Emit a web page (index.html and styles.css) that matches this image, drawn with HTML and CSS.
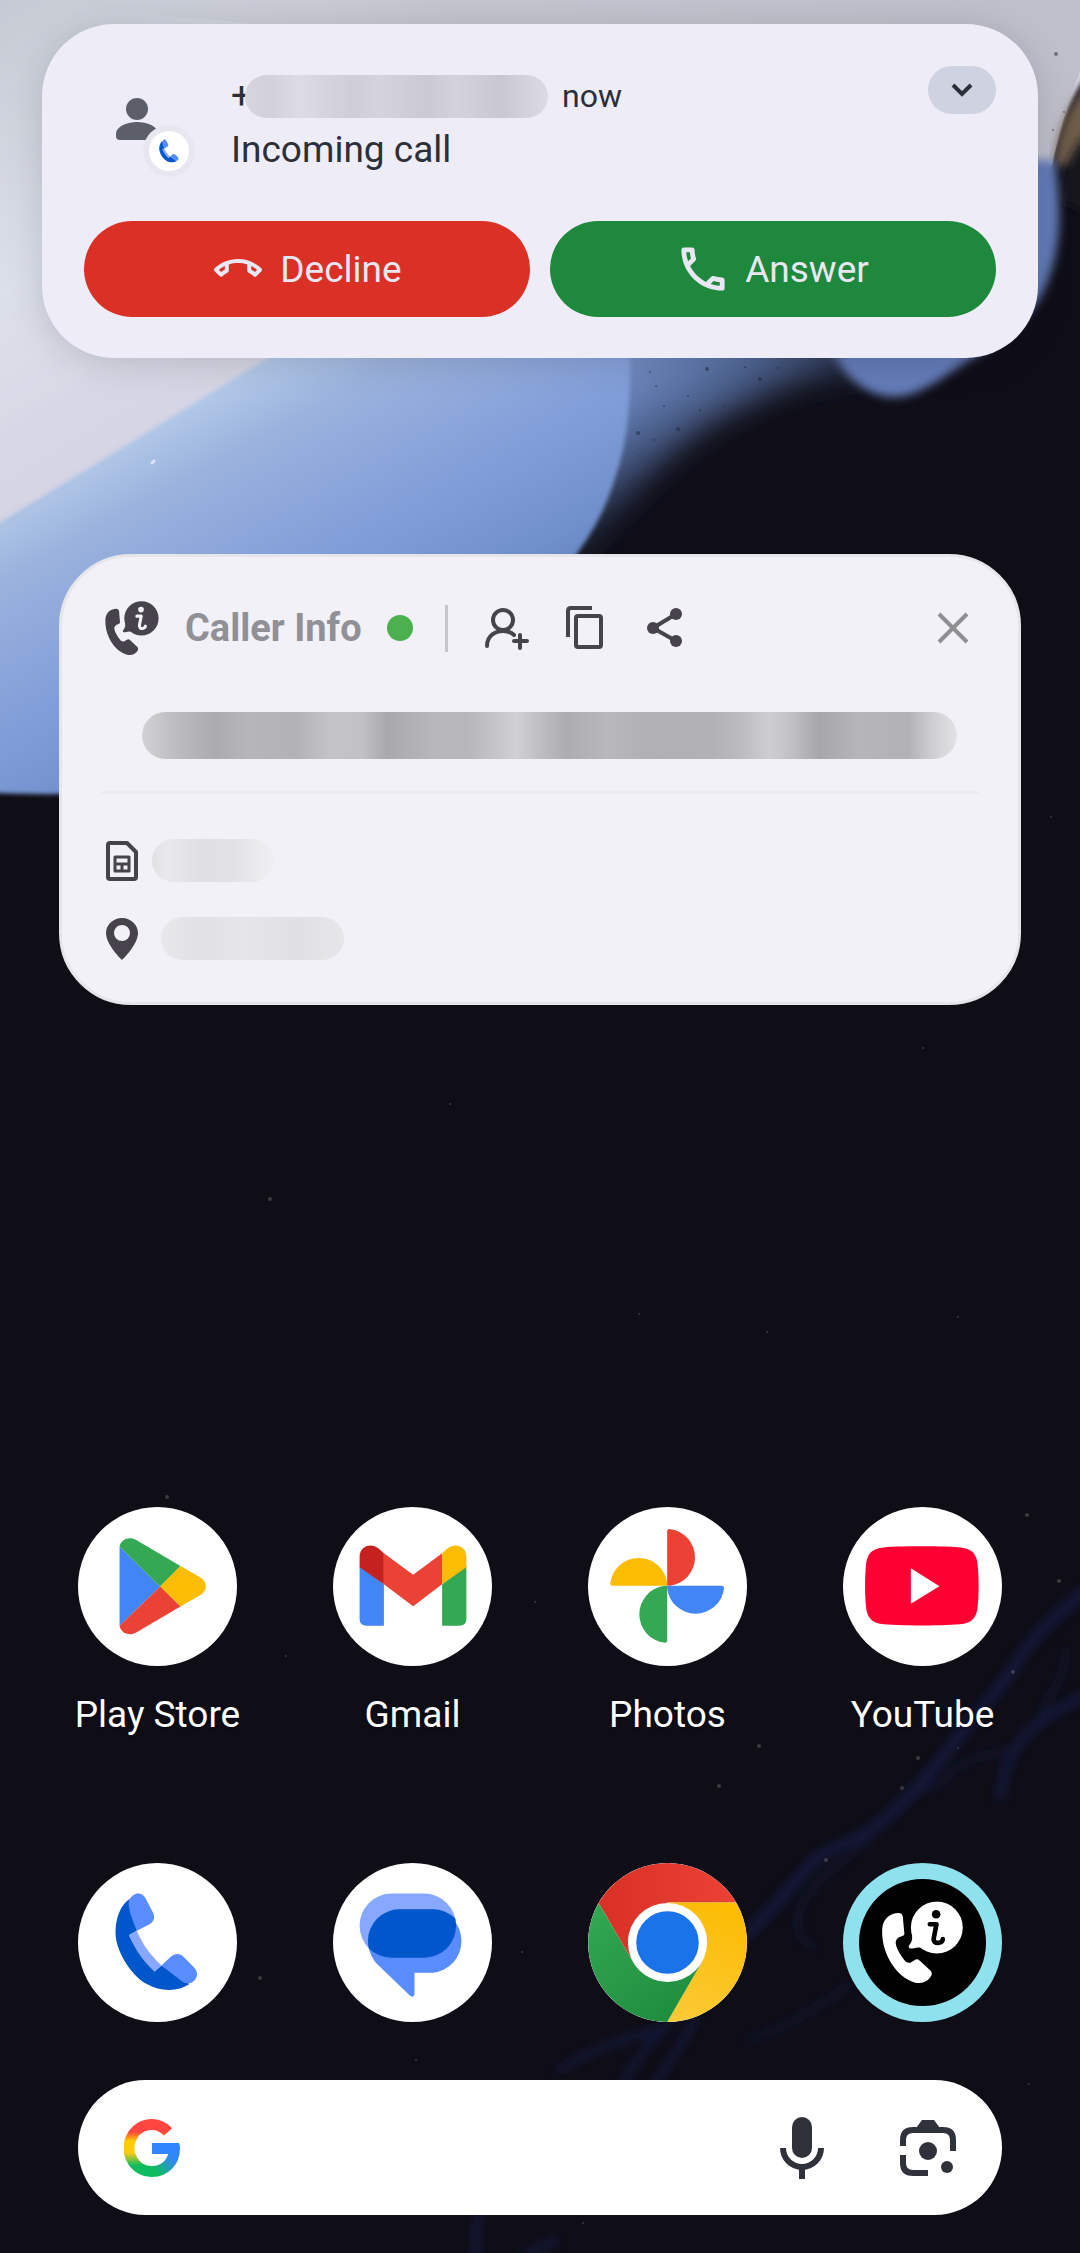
FILE: index.html
```html
<!DOCTYPE html>
<html lang="en">
<head>
  <meta charset="UTF-8" />
  <meta name="viewport" content="width=device-width, initial-scale=1.0"/>
  <title>Home screen</title>
  <link rel="stylesheet" href="styles.css">
</head>
<body>
  <!-- wallpaper -->
  <svg class="wallpaper" viewBox="0 0 1080 2253" preserveAspectRatio="xMidYMin slice" aria-hidden="true">
    <defs>
      <linearGradient id="sky" x1="0" y1="0" x2="260" y2="440" gradientUnits="userSpaceOnUse">
        <stop offset="0" stop-color="#c6cad3"/>
        <stop offset="0.5" stop-color="#dce0ea"/>
        <stop offset="1" stop-color="#d2d0e0"/>
      </linearGradient>
      <linearGradient id="skyTop" x1="0" y1="0" x2="1080" y2="0" gradientUnits="userSpaceOnUse">
        <stop offset="0" stop-color="#c6cad2" stop-opacity="0"/>
        <stop offset="0.4" stop-color="#c5c6d0"/>
        <stop offset="1" stop-color="#bfbfcb"/>
      </linearGradient>
      <linearGradient id="wave" x1="130" y1="440" x2="330" y2="800" gradientUnits="userSpaceOnUse">
        <stop offset="0" stop-color="#b1c8e8"/>
        <stop offset="0.15" stop-color="#9bb2dd"/>
        <stop offset="0.45" stop-color="#839fd9"/>
        <stop offset="0.7" stop-color="#7090cc"/>
        <stop offset="0.95" stop-color="#5a75b2"/>
      </linearGradient>
      <linearGradient id="dust" x1="640" y1="330" x2="718" y2="456" gradientUnits="userSpaceOnUse">
        <stop offset="0" stop-color="#7d99cf"/>
        <stop offset="0.45" stop-color="#5d76a9"/>
        <stop offset="0.75" stop-color="#3d4d72"/>
        <stop offset="1" stop-color="#1a2031"/>
      </linearGradient>
      <filter id="soft2"><feGaussianBlur stdDeviation="2"/></filter>
      <filter id="soft5"><feGaussianBlur stdDeviation="5"/></filter>
      <filter id="soft14" x="-30%" y="-30%" width="160%" height="160%"><feGaussianBlur stdDeviation="14"/></filter>
    </defs>
    <rect width="1080" height="2253" fill="#0f0e17"/>
    <path d="M560 250H880L870 382C810 372 770 395 730 415C680 440 645 480 605 530L560 580Z" fill="url(#dust)" filter="url(#soft14)"/>
    <path d="M-20 -20H1100V60C1070 90 1060 130 1050 170H600L-20 540Z" fill="url(#sky)" filter="url(#soft2)"/>
    <path d="M0 0H1090V50C1070 90 1060 130 1052 165H300V28Z" fill="url(#skyTop)"/>
    <path d="M1100 70C1070 95 1056 135 1054 165L1100 170Z" fill="#6d5b48" filter="url(#soft5)"/>
    <path d="M1100 125C1078 140 1064 160 1060 200L1100 220Z" fill="#14131b" filter="url(#soft5)"/>
    <path d="M-20 535L268 358L360 290H628C632 370 632 430 616 475C604 515 590 535 573 560C540 620 420 720 290 760C190 790 90 799 -20 792Z" fill="url(#wave)" filter="url(#soft2)"/>
    <path d="M800 300L1000 160H1055C1062 215 1062 255 1040 298C1010 340 985 350 960 366C940 380 915 397 895 397C875 397 860 388 845 372Z" fill="#637cb8" filter="url(#soft5)"/>
    <g fill="#1c2438" opacity="0.5">
      <circle cx="656" cy="386" r="1"/><circle cx="688" cy="396" r="1"/><circle cx="707" cy="369" r="2"/>
      <circle cx="664" cy="406" r="1"/><circle cx="678" cy="429" r="2"/><circle cx="638" cy="433" r="2"/>
      <circle cx="724" cy="406" r="1"/><circle cx="654" cy="440" r="1"/><circle cx="640" cy="456" r="1"/>
      <circle cx="745" cy="367" r="1"/><circle cx="760" cy="379" r="2"/><circle cx="632" cy="482" r="1"/>
      <circle cx="778" cy="368" r="1"/><circle cx="650" cy="372" r="1"/><circle cx="700" cy="410" r="1"/>
      <circle cx="1056" cy="54" r="2"/><circle cx="1053" cy="130" r="1"/><circle cx="1064" cy="112" r="1"/>
    </g>
    <path d="M152 463l2 -2" stroke="#dbe8f8" stroke-width="3" stroke-linecap="round"/>
    <!-- blue veins -->
    <g fill="none" stroke="#151d4a" stroke-linecap="round" filter="url(#soft5)" opacity="0.65">
      <path d="M1084 1592C1050 1620 1030 1640 1012 1670C996 1694 970 1720 950 1748C930 1775 915 1790 890 1815C860 1842 835 1845 815 1860C790 1885 775 1910 745 1935" stroke-width="12"/>
      <path d="M1084 1695C1050 1715 1030 1725 1018 1745C1005 1762 1005 1780 1000 1795" stroke-width="10"/>
      <path d="M1018 1748C980 1756 960 1760 945 1780C925 1790 910 1795 890 1815" stroke-width="4"/>
      <path d="M1066 1650C1066 1680 1050 1690 1040 1715" stroke-width="4"/>
      <path d="M870 1840C830 1870 805 1890 798 1915C796 1935 805 1945 815 1946" stroke-width="4"/>
      <path d="M850 1985C820 2005 800 2020 750 2040" stroke-width="4"/>
      <path d="M670 2020C650 2045 635 2060 622 2084M695 2020C680 2045 670 2065 655 2084" stroke-width="7"/>
      <path d="M660 2030C620 2040 590 2050 560 2070" stroke-width="7"/>
      <path d="M480 2212C474 2225 478 2240 476 2260M555 2240C540 2250 530 2250 520 2260" stroke-width="8"/>
    </g>
    <g fill="#8c8c88" opacity="0.35">
      <circle cx="167" cy="1497" r="2"/><circle cx="270" cy="1199" r="2"/><circle cx="759" cy="1746" r="2"/>
      <circle cx="719" cy="1786" r="2"/><circle cx="1027" cy="1515" r="2"/><circle cx="918" cy="1758" r="2"/>
      <circle cx="902" cy="1788" r="2"/><circle cx="1059" cy="1581" r="2"/><circle cx="958" cy="1317" r="1"/>
      <circle cx="767" cy="1332" r="1"/><circle cx="535" cy="1602" r="1"/><circle cx="260" cy="1978" r="2"/>
      <circle cx="416" cy="2060" r="1"/><circle cx="1029" cy="2084" r="1"/><circle cx="583" cy="2223" r="1"/>
      <circle cx="639" cy="1314" r="1"/><circle cx="450" cy="1104" r="1"/><circle cx="923" cy="1048" r="1"/>
      <circle cx="1051" cy="817" r="1"/><circle cx="522" cy="1952" r="1"/><circle cx="286" cy="1656" r="1"/>
      <circle cx="1013" cy="1672" r="2"/><circle cx="958" cy="1748" r="1"/><circle cx="826" cy="1860" r="2"/>
    </g>
  </svg>

  <!-- shared icons -->
  <svg class="sprite" aria-hidden="true">
    <symbol id="caller-icon" viewBox="965 183 246 246">
      <path fill="currentColor" d="M1020 219C998 216 970 232 967 264C962 340 1010 412 1066 428C1090 432 1106 422 1114 408C1118 400 1115 394 1110 390L1080 362C1074 356 1070 356 1064 360L1054 366C1046 370 1038 366 1034 360C1022 345 1010 325 1008 312C1006 302 1010 297 1016 292L1029 287C1034 284 1034 280 1033 276L1029 230C1028 222 1025 220 1020 219Z"/>
      <circle fill="currentColor" cx="1131" cy="262" r="78"/>
      <path fill="currentColor" d="M1056 284C1060 302 1051 311 1047 317C1045 323 1049 326 1056 325C1070 323 1082 320 1094 324Z"/>
      <circle class="hole" cx="1129" cy="222" r="13"/>
      <path class="hole-line" d="M1110 252H1130L1122 293C1120 306 1128 309 1137 308C1145 306 1149 301 1149 297"/>
    </symbol>
    <symbol id="phone-icon" viewBox="150 150 280 310">
      <path fill="#0057cc" d="M206 178C170 205 162 260 168 300C180 355 220 410 260 432C300 456 355 455 388 432L304 376L283 394L206 285L230 272Z"/>
      <path fill="#588cff" d="M206 178L218 166C232 155 248 160 256 174L279 218C285 232 281 244 268 252L230 272C215 235 202 205 206 178Z"/>
      <path fill="#588cff" d="M304 376L332 350C345 338 360 340 370 350L402 382C415 396 412 412 402 422C392 432 378 432 366 424Z"/>
      <path fill="#88a8ff" d="M230 272L206 285C225 330 255 370 283 394L304 376C270 345 245 310 230 272Z"/>
    </symbol>
  </svg>

  <main class="screen">
    <!-- incoming call -->
    <section class="notification" aria-label="Incoming call">
      <div class="notification-head">
        <svg class="avatar" viewBox="0 0 80 80" aria-hidden="true">
          <circle cx="21" cy="11" r="11" fill="#5c5f69"/>
          <path d="M0 36C0 28 12 24 21 24C31 24 42 28 42 36V42H4Q0 42 0 38Z" fill="#5c5f69"/>
          <circle cx="53" cy="53" r="26" fill="#e7e7f2"/>
          <circle cx="53" cy="53" r="20" fill="#fff"/>
          <use href="#phone-icon" x="42" y="40" width="22" height="26"/>
        </svg>
        <div class="notification-text">
          <p class="caller">+<span class="mask mask-number"></span><span class="now">now</span></p>
          <p>Incoming call</p>
        </div>
        <button class="expand" aria-label="Expand">
          <svg width="22" height="14" viewBox="0 0 22 14"><path d="M2 2L11 11L20 2" fill="none" stroke="#2c2f38" stroke-width="4"/></svg>
        </button>
      </div>
      <div class="call-buttons">
        <button class="decline">
          <svg width="48" height="48" viewBox="0 0 24 24" fill="currentColor" aria-hidden="true"><path d="M18.59 10.52c1.05.51 2.04 1.15 2.96 1.91l-1.07 1.07c-.58-.47-1.21-.89-1.88-1.27v-1.71m-13.2 0v1.7c-.65.37-1.28.79-1.87 1.27l-1.07-1.07c.91-.75 1.9-1.38 2.94-1.9M12 7C7.46 7 3.34 8.78.29 11.67c-.18.18-.29.43-.29.71s.11.53.29.7l2.48 2.48c.18.18.43.29.71.29.27 0 .52-.1.7-.28.79-.73 1.68-1.36 2.66-1.85.33-.16.56-.51.56-.9v-3.1C8.85 9.25 10.4 9 12 9s3.15.25 4.59.73v3.1c0 .4.23.74.56.9.98.49 1.88 1.11 2.67 1.85.18.17.43.28.7.28.28 0 .53-.11.71-.29l2.48-2.48c.18-.18.29-.43.29-.71s-.11-.53-.29-.71C20.66 8.78 16.54 7 12 7z"/></svg>
          Decline
        </button>
        <button class="answer">
          <svg width="48" height="48" viewBox="2 2 20 20" fill="currentColor" aria-hidden="true"><path d="M6.54 5c.06.89.21 1.76.45 2.59l-1.2 1.2c-.41-1.2-.67-2.47-.76-3.79h1.51m9.86 12.02c.85.24 1.72.39 2.6.45v1.49c-1.32-.09-2.59-.35-3.8-.75l1.2-1.19M7.5 3H4c-.55 0-1 .45-1 1 0 9.39 7.61 17 17 17 .55 0 1-.45 1-1v-3.49c0-.55-.45-1-1-1-1.24 0-2.45-.2-3.57-.57-.1-.04-.21-.05-.31-.05-.26 0-.51.1-.71.29l-2.2 2.2c-2.83-1.45-5.15-3.76-6.59-6.59l2.2-2.2c.28-.28.36-.67.25-1.02C8.7 6.45 8.5 5.25 8.5 4c0-.55-.45-1-1-1z"/></svg>
          Answer
        </button>
      </div>
    </section>

    <!-- caller info popup -->
    <section class="info-card" aria-label="Caller Info">
      <header class="info-head">
        <svg class="info-logo" aria-hidden="true"><use href="#caller-icon"/></svg>
        <h1>Caller Info</h1>
        <span class="status"></span>
        <span class="divider"></span>
        <div class="actions">
          <button class="icon-button" aria-label="Add contact">
            <svg width="48" height="48" viewBox="0 0 48 48"><g fill="none" stroke="#46434c" stroke-width="4" stroke-linecap="round"><circle cx="20" cy="16" r="10"/><path d="M4 42C4 31 13 27 20 27C25 27 29 29 31 31M37 31V44M31 37H44"/></g></svg>
          </button>
          <button class="icon-button" aria-label="Copy">
            <svg width="48" height="48" viewBox="0 0 48 48"><g fill="none" stroke="#46434c" stroke-width="4"><path d="M6 33V7Q6 4 9 4H30"/><rect x="14" y="12" width="25" height="31" rx="2"/></g></svg>
          </button>
          <button class="icon-button" aria-label="Share">
            <svg width="48" height="48" viewBox="0 0 48 48"><path d="M35 10L12 24L35 37" fill="none" stroke="#46434c" stroke-width="4"/><g fill="#46434c"><circle cx="35" cy="10" r="6"/><circle cx="12" cy="24" r="6"/><circle cx="35" cy="37" r="6"/></g></svg>
          </button>
        </div>
        <button class="icon-button close" aria-label="Close">
          <svg width="48" height="48" viewBox="0 0 48 48"><path d="M10 10L38 38M38 10L10 38" stroke="#8f8e93" stroke-width="4"/></svg>
        </button>
      </header>
      <div class="mask mask-name"></div>
      <hr>
      <div class="info-row">
        <svg width="32" height="40" viewBox="0 0 32 40" aria-hidden="true"><g fill="none" stroke="#46434c" stroke-linejoin="round"><path d="M4 2H21L30 11V36Q30 38 28 38H4Q2 38 2 36V4Q2 2 4 2Z" stroke-width="4"/><path d="M9 16H23V30H9ZM9 23H23M16 23V30" stroke-width="3"/></g></svg>
        <span class="mask mask-sim"></span>
      </div>
      <div class="info-row location">
        <svg width="32" height="42" viewBox="0 0 32 42" aria-hidden="true"><path fill="#46434c" fill-rule="evenodd" d="M16 0C7 0 0 7 0 15C0 27 16 42 16 42S32 27 32 15C32 7 25 0 16 0ZM16 7A8 8 0 1 1 16 23A8 8 0 1 1 16 7Z"/></svg>
        <span class="mask mask-place"></span>
      </div>
    </section>

    <!-- apps -->
    <nav class="apps" aria-label="Apps">
      <a class="app" href="#">
        <svg viewBox="53 51 478 478" aria-hidden="true">
          <path fill="#4285f4" d="M178 170L300 290L178 408Z"/>
          <path fill="#34a853" d="M178 170C182 147 208 138 228 150L361 228L300 290Z"/>
          <path fill="#fbbc04" d="M361 228L420 262C443 275 443 303 420 316L361 350L300 290Z"/>
          <path fill="#ea4335" d="M178 408L300 290L361 350L228 428C208 440 182 431 178 408Z"/>
        </svg>
        <span>Play Store</span>
      </a>
      <a class="app" href="#">
        <svg viewBox="819 51 478 478" aria-hidden="true">
          <path fill="#4285f4" d="M899 228L972 283V408H920Q899 408 899 387Z"/>
          <path fill="#c5221f" d="M899 232V200C899 170 932 156 956 176L972 190V283Z"/>
          <path fill="#ea4335" d="M972 190L1060 255L1147 190V283L1060 349L972 283Z"/>
          <path fill="#34a853" d="M1147 283L1220 228V387Q1220 408 1199 408H1147Z"/>
          <path fill="#fbbc04" d="M1147 190L1163 176C1187 156 1220 170 1220 200V232L1147 283Z"/>
        </svg>
        <span>Gmail</span>
      </a>
      <a class="app" href="#">
        <svg viewBox="83 51 478 478" aria-hidden="true">
          <path fill="#ea4335" d="M321 288V124Q321 117 328 117A86 86 0 0 1 328 288Z"/>
          <path fill="#4285f4" d="M321 288H485Q492 288 492 295A86 86 0 0 1 321 295Z"/>
          <path fill="#34a853" d="M321 288V452Q321 459 314 459A86 86 0 0 1 314 288Z"/>
          <path fill="#fbbc04" d="M321 288H157Q150 288 150 281A86 86 0 0 1 321 281Z"/>
        </svg>
        <span>Photos</span>
      </a>
      <a class="app" href="#">
        <svg viewBox="849 51 478 478" aria-hidden="true">
          <path fill="#ff0033" d="M1086 169C1140 169 1185 170 1212 174C1236 178 1249 192 1253 218C1258 262 1258 314 1253 358C1249 384 1236 398 1212 402C1185 406 1140 407 1086 407C1032 407 987 406 960 402C936 398 923 384 919 358C914 314 914 262 919 218C923 192 936 178 960 174C987 170 1032 169 1086 169Z"/>
          <path fill="#fff" d="M1053 235L1139 289L1053 342Z"/>
        </svg>
        <span>YouTube</span>
      </a>
    </nav>

    <!-- dock -->
    <nav class="apps dock" aria-label="Dock">
      <a class="app" href="#" aria-label="Phone">
        <svg viewBox="53 68 478 478" aria-hidden="true"><use href="#phone-icon" x="150" y="150" width="280" height="310"/></svg>
      </a>
      <a class="app" href="#" aria-label="Messages">
        <svg viewBox="819 68 478 478" aria-hidden="true">
          <clipPath id="bubble"><rect x="899" y="160" width="290" height="193" rx="96"/></clipPath>
          <rect x="899" y="160" width="290" height="193" rx="96" fill="#88a8ff"/>
          <path fill="#588cff" d="M1020 207H1119A96 96 0 0 1 1119 398H1064V462Q1062 476 1050 466L950 370C935 352 924 328 924 303A96 96 0 0 1 1020 207Z"/>
          <rect x="924" y="207" width="291" height="192" rx="96" fill="#0057cc" clip-path="url(#bubble)"/>
        </svg>
      </a>
      <a class="app" href="#" aria-label="Chrome">
        <svg viewBox="83 68 478 478" aria-hidden="true">
          <defs>
            <linearGradient id="chromeRed"><stop offset="0" stop-color="#d93025"/><stop offset="1" stop-color="#ea4335"/></linearGradient>
            <linearGradient id="chromeGreen" x1="0" y1="0" x2="0.7" y2="1"><stop offset="0" stop-color="#34a853"/><stop offset="1" stop-color="#1e8e3e"/></linearGradient>
            <linearGradient id="chromeYellow" x1="0.6" y1="0" x2="0.3" y2="1"><stop offset="0" stop-color="#fbbc04"/><stop offset="1" stop-color="#fcc934"/></linearGradient>
          </defs>
          <path fill="url(#chromeRed)" d="M115 188A239 239 0 0 1 529 187H322L219 366Z"/>
          <path fill="url(#chromeYellow)" d="M529 187A239 239 0 0 1 321 546L425 366L322 307V187Z"/>
          <path fill="url(#chromeGreen)" d="M321 546A239 239 0 0 1 115 188L219 366L322 307L425 366Z"/>
          <circle cx="322" cy="307" r="119" fill="#fff"/>
          <circle cx="322" cy="307" r="94" fill="#1a73e8"/>
        </svg>
      </a>
      <a class="app caller-app" href="#" aria-label="Caller Info">
        <svg viewBox="849 68 478 478" aria-hidden="true">
          <circle cx="1088" cy="307" r="191" fill="#000"/>
          <use href="#caller-icon" x="965" y="183" width="246" height="246"/>
        </svg>
      </a>
    </nav>

    <!-- search -->
    <form class="search" role="search">
      <svg width="56" height="58" viewBox="0 0 56 58" aria-hidden="true">
        <defs>
          <linearGradient id="gLeft" x1="0" y1="0" x2="0" y2="58" gradientUnits="userSpaceOnUse">
            <stop offset="0.22" stop-color="#ff4641"/><stop offset="0.38" stop-color="#ffcc00"/>
            <stop offset="0.58" stop-color="#ffcc10"/><stop offset="0.8" stop-color="#0ebc5f"/>
          </linearGradient>
          <linearGradient id="gRight" x1="32" y1="52" x2="48" y2="38" gradientUnits="userSpaceOnUse">
            <stop offset="0" stop-color="#0ebc5f"/><stop offset="1" stop-color="#3186ff"/>
          </linearGradient>
        </defs>
        <g fill="none" stroke-width="11">
          <path d="M28 52.5A22.5 23.5 0 1 1 44 13" stroke="url(#gLeft)"/>
          <path d="M28 52.5C41 52.5 50.5 43 50.5 29" stroke="url(#gRight)"/>
        </g>
        <path d="M28 24H55Q56 26 56 30L45 35H28Z" fill="#3186ff"/>
      </svg>
      <input type="search" aria-label="Search">
      <button class="icon-button" type="button" aria-label="Voice search">
        <svg width="44" height="62" viewBox="0 0 44 62"><rect x="12" width="20" height="41" rx="10" fill="#2f323b"/><path d="M3 31A19 19 0 0 0 41 31" fill="none" stroke="#2f323b" stroke-width="6"/><path d="M19 50H25V62H19Z" fill="#2f323b"/></svg>
      </button>
      <button class="icon-button" type="button" aria-label="Search with camera">
        <svg width="56" height="56" viewBox="0 0 56 56"><path d="M3 26V20Q3 10 13 10H43Q53 10 53 20V31M3 35V43Q3 53 13 53H28" fill="none" stroke="#2f323b" stroke-width="6"/><path d="M16 8L22 0H34L40 8Z" fill="#2f323b"/><circle cx="28" cy="31" r="9" fill="#2f323b"/><circle cx="47" cy="47" r="6" fill="#2f323b"/></svg>
      </button>
    </form>
  </main>
</body>
</html>
```
FILE: styles.css
```css
* {
  margin: 0;
  padding: 0;
  box-sizing: border-box;
}

body {
  position: relative;
  min-height: 100vh;
  font-family: Roboto, sans-serif;
  font-size: 37px;
  color: #2c2f38;
  background: #0f0e17;
}

button {
  border: none;
  background: none;
  font: inherit;
  cursor: pointer;
}

svg {
  display: block;
  flex-shrink: 0;
}

.wallpaper {
  position: absolute;
  top: 0;
  left: 0;
  width: 100%;
  height: 100%;
}

.sprite {
  position: absolute;
  width: 0;
  height: 0;
}

.screen {
  position: relative;
  min-height: 100vh;
  display: flex;
  flex-direction: column;
  padding: 24px 0 38px;
}

/* notification */
.notification {
  margin: 0 42px;
  padding: 42px 42px 41px;
  border-radius: 72px;
  background: #eeecf6;
  box-shadow: 0 4px 36px rgba(0, 0, 0, 0.15);
}

.notification-head {
  display: flex;
  align-items: flex-start;
  padding-left: 32px;
}

.avatar {
  width: 80px;
  height: 80px;
  margin-top: 32px;
  overflow: visible;
}

.notification-text {
  flex: 1;
  margin: 3px 0 0 35px;
  line-height: 54px;
}

.caller {
  display: flex;
  align-items: center;
}

.now {
  margin-left: 14px;
  font-size: 32px;
}

.expand {
  display: flex;
  align-items: center;
  justify-content: center;
  width: 68px;
  height: 48px;
  border-radius: 24px;
  background: #cfd2e1;
}

.call-buttons {
  display: grid;
  grid-template-columns: 1fr 1fr;
  gap: 20px;
  margin-top: 43px;
}

.call-buttons button {
  display: flex;
  align-items: center;
  justify-content: center;
  gap: 18px;
  height: 96px;
  padding-left: 2px;
  border-radius: 48px;
  color: #e9e7f3;
}

.call-buttons .decline {
  background: #da3026;
}

.call-buttons .answer {
  background: #1e883c;
}

/* smudged private data */
.mask {
  display: block;
  border-radius: 24px;
}

.mask-number {
  width: 303px;
  height: 43px;
  margin-left: -7px;
  background: linear-gradient(90deg, #d6d5de, #d2d1da 8%, #dddce5 18%, #d3d2db 30%, #cfced7 36%, #d5d4dd 44%, #cbcad3 60%, #d4d3dc 70%, #c9c8d1 84%, #d6d5de 95%, #dcdbe4);
}

.mask-name {
  height: 47px;
  margin: 57px 22px 0 41px;
  background: linear-gradient(90deg, #d2d2d6, #b9b9bc 5%, #acacae 9%, #b6b6b9 13%, #b3b3b6 19%, #c4c4c8 23%, #c2c2c6 27%, #a9a9ab 30%, #b8b8bb 36%, #b7b7bb 40%, #d0d0d5 46%, #adadaf 52%, #b8b8bb 57%, #b1b1b4 62%, #b2b2b5 70%, #bababd 73%, #cfcfd3 77%, #bfbfc3 80%, #a7a7a9 83%, #b6b6b9 88%, #b2b2b4 94%, #cfcfd3 97%, #e2e2e7);
}

.mask-sim {
  width: 122px;
  height: 43px;
  margin-left: 14px;
  background: linear-gradient(90deg, #e0e0e5, #e8e8ed 12%, #dfdfe4 40%, #e1e1e6 65%, #ebebf0 90%, #eeeef3);
}

.mask-place {
  width: 183px;
  height: 43px;
  margin-left: 23px;
  background: linear-gradient(90deg, #e8e8ed, #e0e0e5 22%, #e5e5ea 45%, #dfdfe4 75%, #e6e6eb);
}

/* caller info */
.info-card {
  margin: 196px 59px 0;
  padding: 44px 39px 42px;
  border: 3px solid #e5e5ea;
  border-radius: 72px;
  background: #f2f1f7;
}

.info-head {
  display: flex;
  align-items: center;
  padding-left: 4px;
}

.info-logo {
  width: 54px;
  height: 54px;
  color: #46434c;
}

.info-head h1 {
  margin-left: 26px;
  font-size: 38px;
  font-weight: 700;
  line-height: 44px;
  color: #919096;
}

.status {
  width: 26px;
  height: 26px;
  margin-left: 25px;
  border-radius: 50%;
  background: #4caf50;
}

.divider {
  width: 3px;
  height: 47px;
  margin: 0 35px 0 32px;
  background: #c6c5ca;
}

.actions {
  display: flex;
  gap: 31px;
}

.icon-button {
  display: flex;
  align-items: center;
  justify-content: center;
}

.close {
  margin-left: auto;
  margin-right: 2px;
}

.info-card hr {
  height: 3px;
  margin-top: 32px;
  border: none;
  background: #ebebf0;
}

.info-row {
  display: flex;
  align-items: center;
  margin-top: 45px;
  padding-left: 5px;
}

.location {
  margin-top: 35px;
}

/* app grid */
.apps {
  display: grid;
  grid-template-columns: repeat(4, 1fr);
  margin: auto 30px 0;
}

.app {
  display: flex;
  flex-direction: column;
  align-items: center;
  gap: 27px;
  line-height: 44px;
  color: #fff;
  text-decoration: none;
  text-shadow: 0 1px 3px rgba(0, 0, 0, 0.6);
}

.app svg {
  width: 159px;
  height: 159px;
  border-radius: 50%;
  background: #fff;
}

.dock {
  margin-top: 126px;
}

.app.caller-app svg {
  color: #fff;
  background: #90e1ee;
}

/* cut-out part of the caller icon takes the colour behind it */
.caller-app {
  --hole: #000;
}

.hole {
  fill: var(--hole, #f2f1f7);
}

.hole-line {
  fill: none;
  stroke: var(--hole, #f2f1f7);
  stroke-width: 14px;
  stroke-linecap: round;
  stroke-linejoin: round;
}

/* search bar */
.search {
  display: flex;
  align-items: center;
  height: 135px;
  margin: 58px 78px 0;
  padding: 0 46px;
  border-radius: 68px;
  background: #fff;
}

.search input {
  flex: 1;
  min-width: 0;
  height: 60px;
  margin: 0 24px;
  border: none;
  outline: none;
  background: none;
  font: inherit;
}

.search .icon-button + .icon-button {
  margin-left: 76px;
}
```
